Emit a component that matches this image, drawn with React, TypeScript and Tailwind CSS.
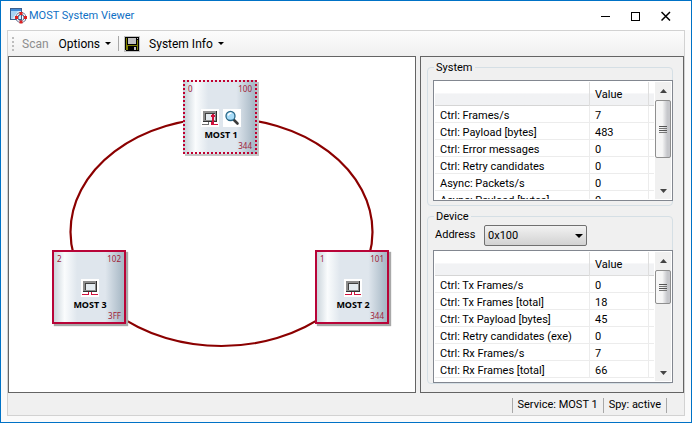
import { useState } from "react";
import type { ReactNode } from "react";

type Row = { name: string; value: string };

const systemRows: Row[] = [
  { name: "Ctrl: Frames/s", value: "7" },
  { name: "Ctrl: Payload [bytes]", value: "483" },
  { name: "Ctrl: Error messages", value: "0" },
  { name: "Ctrl: Retry candidates", value: "0" },
  { name: "Async: Packets/s", value: "0" },
  { name: "Async: Payload [bytes]", value: "0" },
];

const deviceRows: Row[] = [
  { name: "Ctrl: Tx Frames/s", value: "0" },
  { name: "Ctrl: Tx Frames [total]", value: "18" },
  { name: "Ctrl: Tx Payload [bytes]", value: "45" },
  { name: "Ctrl: Retry candidates (exe)", value: "0" },
  { name: "Ctrl: Rx Frames/s", value: "7" },
  { name: "Ctrl: Rx Frames [total]", value: "66" },
];

function AppIcon() {
  return (
    <svg width="17" height="16" viewBox="0 0 17 16" aria-hidden="true">
      <rect x="0.5" y="0.5" width="11" height="11" fill="#d7eafa" stroke="#3c5f8c" />
      <path d="M1 1h10v2H1z" fill="#3f8ad8" />
      <path d="M1 3h7L2 11H1z" fill="#a8d2f4" />
      <circle cx="11" cy="9.500" r="4" fill="none" stroke="#2d3b66" strokeWidth="2.800" />
      <circle cx="11" cy="9.500" r="4" fill="none" stroke="#f4f6fb" strokeWidth="1.600" />
      <path d="M9.500 4h3v3h-3zM9.500 12.500h3v3h-3zM5 8h3v3H5zM14 8h3v3h-3z" fill="#e02020" />
    </svg>
  );
}

function SaveIcon() {
  return (
    <svg width="16" height="16" viewBox="0 0 16 16" shapeRendering="crispEdges" aria-hidden="true">
      <rect width="16" height="16" fill="#c0c0c0" />
      <path d="M1 1h14v14H2l-1-1z" fill="#000" />
      <path d="M2 2h1v12H2zM13 4h1v10h-1zM3 9h10v1H3zM3 10h1v4H3z" fill="#808000" />
      <path d="M4 2h8v6H4zM13 2h1v1h-1zM10 11h2v3h-2z" fill="#c0c0c0" />
    </svg>
  );
}

function DeviceIcon({ master = false }: { master?: boolean }) {
  return (
    <svg width="18" height="18" viewBox="0 0 18 18" shapeRendering="crispEdges" aria-hidden="true">
      <rect width="18" height="18" fill="#fff" />
      <path d="M2 2h14v11H2z" fill="#303030" />
      <path d="M2 2h13v10H2z" fill="#8c8c8c" />
      <path d="M4 4h10v7H4z" fill="#404040" />
      <path d="M5 5h9v6H5z" fill="#e4ebf0" />
      <path d="M7 13h1v3H1v-1h6z" fill={master ? "#707070" : "#d0103c"} />
      <path d="M10 13h1v2h6v1h-7z" fill="#d0103c" />
      {master && <path d="M11 5h2v1h1v2h-1v7h4v1h-6V8h-1V6h1z" fill="#d0103c" />}
    </svg>
  );
}

function SearchIcon() {
  return (
    <svg width="18" height="18" viewBox="0 0 18 18" aria-hidden="true">
      <rect width="18" height="18" fill="#fff" />
      <path d="M11 11l3.500 3.500" stroke="#3a3a3a" strokeWidth="2.600" strokeLinecap="round" />
      <circle cx="7.500" cy="7" r="4.500" fill="#a8dcf8" stroke="#2a6888" strokeWidth="1.300" />
      <path d="M5 6.500q1-2.500 3.500-2.500" fill="none" stroke="#fff" strokeWidth="1.400" />
    </svg>
  );
}

function Arrow({ up = false }: { up?: boolean }) {
  return (
    <svg width="7" height="4" viewBox="0 0 7 4" aria-hidden="true">
      <path d={up ? "M0 4L3.500 0L7 4z" : "M0 0h7L3.500 4z"} fill="#444" />
    </svg>
  );
}

function MenuArrow() {
  return (
    <svg width="6" height="3" viewBox="0 0 6 3" aria-hidden="true">
      <path d="M0 0h6L3 3z" />
    </svg>
  );
}

type NodeProps = {
  place: string;
  frame: string;
  index: string;
  address: string;
  code: string;
  label: string;
  children: ReactNode;
};

function RingNode({ place, frame, index, address, code, label, children }: NodeProps) {
  return (
    <div
      className={`absolute flex size-[74px] flex-col border-2 bg-[linear-gradient(to_right,#c3ced6_0%,#fafcfd_17%,#dfe6ed_34%,#dfe6ed_72%,#a7b8c5_96%,#b4c3ce_100%)] bg-origin-border font-['Noto_Sans',sans-serif] text-[8px] leading-[10px] text-[#a02038] ${place} ${frame}`}
    >
      <div className="flex justify-between px-[3px] pt-[2px]">
        <span>{index}</span>
        <span>{address}</span>
      </div>
      <div className="flex flex-col items-center pt-[15px] pl-[2px]">
        <div className="flex gap-1">{children}</div>
        <span className="text-[9px] leading-[15px] font-bold text-black">{label}</span>
      </div>
      <div className="-mt-px pr-[3px] text-right">{code}</div>
    </div>
  );
}

function ValueList({ label, rows, box, thumb }: { label: string; rows: Row[]; box: string; thumb: string }) {
  return (
    <div className={`-mr-px flex border border-[#828790] bg-white p-px ${box}`}>
      <div className="mr-px flex-1 overflow-hidden">
        <table aria-label={label} className="w-full table-fixed border-separate border-spacing-0 text-left">
          <colgroup>
            <col />
            <col className="w-[60px]" />
            <col className="w-[5px]" />
          </colgroup>
          <thead>
            <tr className="h-6 bg-linear-to-b from-white from-45% to-[#f1f2f4] to-50%">
              <th className="border-b border-[#d5d5d5] font-normal" />
              <th className="border-x border-b border-[#dedede] px-[5px] pt-[3px] font-normal">Value</th>
              <th className="border-b border-[#d5d5d5]" />
            </tr>
          </thead>
          <tbody>
            {rows.map((row) => (
              <tr key={row.name} className="h-[17px]">
                <td className="border-b border-[#ececec] pt-[3px] pl-[5px] leading-[13px] whitespace-nowrap">
                  {row.name}
                </td>
                <td className="border-x border-b border-[#ececec] pt-[3px] pl-[5px] leading-[13px]">{row.value}</td>
                <td className="border-b border-[#ececec]" />
              </tr>
            ))}
          </tbody>
        </table>
      </div>
      <div className="flex w-4 flex-col bg-[#f0f0f0]">
        <button type="button" aria-label="Scroll up" className="flex h-[18px] items-center justify-center">
          <Arrow up />
        </button>
        <div
          className={`flex flex-col items-center justify-center gap-px rounded-xs border border-[#8f8f8f] bg-linear-to-r from-[#f6f6f6] from-45% to-[#c6c7cb] to-80% ${thumb}`}
        >
          <span className="h-px w-2 bg-[#555]" />
          <span className="h-px w-2 bg-[#777]" />
          <span className="h-px w-2 bg-[#555]" />
          <span className="h-px w-2 bg-[#777]" />
        </div>
        <button type="button" aria-label="Scroll down" className="mt-auto flex h-4 items-center justify-center">
          <Arrow />
        </button>
      </div>
    </div>
  );
}

function Separator() {
  return <span className="h-[15px] w-px bg-[#a8a8a8]" />;
}

export default function App() {
  const [address, setAddress] = useState("0x100");

  return (
    <div className="flex min-h-screen flex-col border border-[#0072c6] bg-[#fafafa] px-[6px] pb-[6px] font-['Roboto',sans-serif] text-black">
      <header className="-mx-[6px] flex h-[29px] items-center bg-white pr-[20px] pl-[9px]">
        <AppIcon />
        <h1 className="ml-[2px] pt-[2px] text-[11px] text-[#0f70c4]">MOST System Viewer</h1>
        <div className="ml-auto flex items-center gap-5">
          <button type="button" aria-label="Minimize">
            <svg width="10" height="10" viewBox="0 0 10 10" shapeRendering="crispEdges">
              <path d="M0 5h9v1H0z" />
            </svg>
          </button>
          <button type="button" aria-label="Maximize">
            <svg width="10" height="10" viewBox="0 0 10 10" shapeRendering="crispEdges">
              <path d="M0.500 1.500h8v8h-8z" fill="none" stroke="#000" />
            </svg>
          </button>
          <button type="button" aria-label="Close">
            <svg width="10" height="10" viewBox="0 0 10 10">
              <path d="M0.500 1l8.500 8.500M9 1L0.500 9.500" stroke="#000" strokeWidth="1.500" />
            </svg>
          </button>
        </div>
      </header>

      <main className="flex flex-1 flex-col border border-[#d2d2d2] bg-[#f0f0f0]">
        <nav className="flex h-[25px] items-center bg-linear-to-b from-[#fcfcfc] to-[#f0f0f0] pl-1 text-[12px]">
          <span className="flex flex-col gap-[2px]">
            <span className="size-[2px] bg-[#bdbdbd]" />
            <span className="size-[2px] bg-[#bdbdbd]" />
            <span className="size-[2px] bg-[#bdbdbd]" />
            <span className="size-[2px] bg-[#bdbdbd]" />
          </span>
          <button type="button" disabled className="ml-2 text-[#8d8d8d]">
            Scan
          </button>
          <button type="button" className="ml-[10px] flex items-center gap-[5px]">
            Options <MenuArrow />
          </button>
          <span className="mr-[5px] ml-[7px] flex">
            <Separator />
          </span>
          <button type="button" aria-label="Save">
            <SaveIcon />
          </button>
          <button type="button" className="ml-[9px] flex items-center gap-[5px]">
            System Info <MenuArrow />
          </button>
        </nav>

        <div className="flex flex-1 gap-1">
          <section aria-label="Ring" className="relative flex-1 overflow-hidden border border-[#646464] bg-white">
            <svg className="absolute top-0 left-0" width="406" height="335" viewBox="0 0 406 335" aria-hidden="true">
              <ellipse cx="212.500" cy="175" rx="151" ry="114" fill="none" stroke="#8b0000" strokeWidth="2.200" />
            </svg>
            <RingNode
              place="top-[23px] left-[174px]"
              frame="border-dotted border-[#c00030] shadow-[2px_2px_0_#c4c4c4]"
              index="0"
              address="100"
              code="344"
              label="MOST 1"
            >
              <DeviceIcon master />
              <SearchIcon />
            </RingNode>
            <RingNode
              place="top-[193px] left-[306px]"
              frame="border-[#b80438] shadow-[2px_2px_1px_#a8a8a8]"
              index="1"
              address="101"
              code="344"
              label="MOST 2"
            >
              <DeviceIcon />
            </RingNode>
            <RingNode
              place="top-[193px] left-[43px]"
              frame="border-[#b80438] shadow-[2px_2px_1px_#a8a8a8]"
              index="2"
              address="102"
              code="3FF"
              label="MOST 3"
            >
              <DeviceIcon />
            </RingNode>
          </section>

          <aside className="flex w-[264px] shrink-0 flex-col gap-[2px] border border-[#646464] pt-[2px] pr-[10px] pb-[7px] pl-[6px] text-[11px]">
            <fieldset className="min-w-0 rounded-sm border border-[#d5dfe5] pt-1 pb-1 pl-[5px]">
              <legend className="ml-[1px] px-[2px] leading-[17px]">System</legend>
              <ValueList label="System" rows={systemRows} box="h-[121px]" thumb="h-[58px]" />
            </fieldset>
            <fieldset className="min-w-0 rounded-sm border border-[#d5dfe5] pl-[5px]">
              <legend className="ml-[1px] px-[2px] leading-[17px]">Device</legend>
              <div className="mb-1 flex h-[21px] items-center pl-[2px]">
                <label htmlFor="address" className="w-[49px]">
                  Address
                </label>
                <span className="relative flex">
                  <select
                    id="address"
                    value={address}
                    onChange={(event) => setAddress(event.target.value)}
                    className="h-[21px] w-[103px] appearance-none rounded-xs border border-[#707070] bg-linear-to-b from-[#f2f2f2] to-[#d2d2d2] pt-px pl-[3px]"
                  >
                    <option>0x100</option>
                    <option>0x101</option>
                    <option>0x102</option>
                  </select>
                  <svg
                    className="pointer-events-none absolute top-[9px] right-[4px]"
                    width="8"
                    height="4"
                    viewBox="0 0 8 4"
                    aria-hidden="true"
                  >
                    <path d="M0 0h8L4 4z" />
                  </svg>
                </span>
              </div>
              <ValueList label="Device" rows={deviceRows} box="h-[133px]" thumb="h-[34px]" />
            </fieldset>
          </aside>
        </div>

        <footer className="flex h-[22px] items-center justify-end gap-[5px] pt-[2px] pr-[17px] text-[11px]">
          <Separator />
          <span>Service: MOST 1</span>
          <Separator />
          <span>Spy: active</span>
          <Separator />
        </footer>
      </main>
    </div>
  );
}
